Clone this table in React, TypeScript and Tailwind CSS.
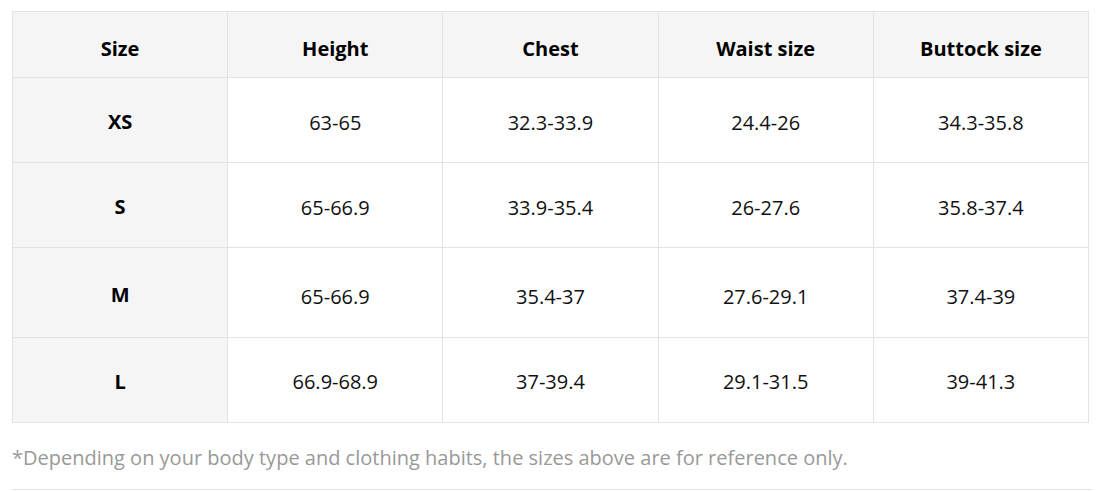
import React from "react";

const headers = ["Size", "Height", "Chest", "Waist size", "Buttock size"];
const rows: { h: string; pad: string; cells: string[] }[] = [
  { h: "h-[85px]", pad: "pt-[5px]", cells: ["XS", "63-65", "32.3-33.9", "24.4-26", "34.3-35.8"] },
  { h: "h-[85px]", pad: "pt-[5px]", cells: ["S", "65-66.9", "33.9-35.4", "26-27.6", "35.8-37.4"] },
  { h: "h-[90px]", pad: "pt-[9px]", cells: ["M", "65-66.9", "35.4-37", "27.6-29.1", "37.4-39"] },
  { h: "h-[85px]", pad: "pt-[3px]", cells: ["L", "66.9-68.9", "37-39.4", "29.1-31.5", "39-41.3"] },
];

export default function App() {
  return (
    <div
      className="w-[1110px] h-[491px] bg-white pl-[12px] pr-[21px] pt-[11px] text-[#111]"
      style={{ fontFamily: '"Open Sans", "Noto Sans", sans-serif' }}
    >
      <table className="w-[1077px] table-fixed border-collapse">
        <thead>
          <tr className="h-[66px] bg-[#f5f5f5]">
            {headers.map((t) => (
              <th
                key={t}
                className="border border-[#e3e3e3] pt-[9px] p-0 text-[20px] font-bold text-black text-center align-middle"
              >
                {t}
              </th>
            ))}
          </tr>
        </thead>
        <tbody>
          {rows.map((r) => (
            <tr key={r.cells[0]} className={r.h}>
              {r.cells.map((c, i) => (
                <td
                  key={i}
                  className={
                    i === 0
                      ? "border border-[#e3e3e3] bg-[#f5f5f5] pt-[4px] text-center align-middle text-[20px] font-bold text-black"
                      : `border border-[#e3e3e3] bg-white ${r.pad} text-center align-middle text-[20px] text-[#111]`
                  }
                >
                  {c}
                </td>
              ))}
            </tr>
          ))}
        </tbody>
      </table>
      <p className="mt-[21px] text-[20px] leading-[28px] text-[#999]">
        *Depending on your body type and clothing habits, the sizes above are for reference only.
      </p>
      <div className="mt-[17px] w-[1080px] border-t border-[#e3e3e3]" />
    </div>
  );
}
